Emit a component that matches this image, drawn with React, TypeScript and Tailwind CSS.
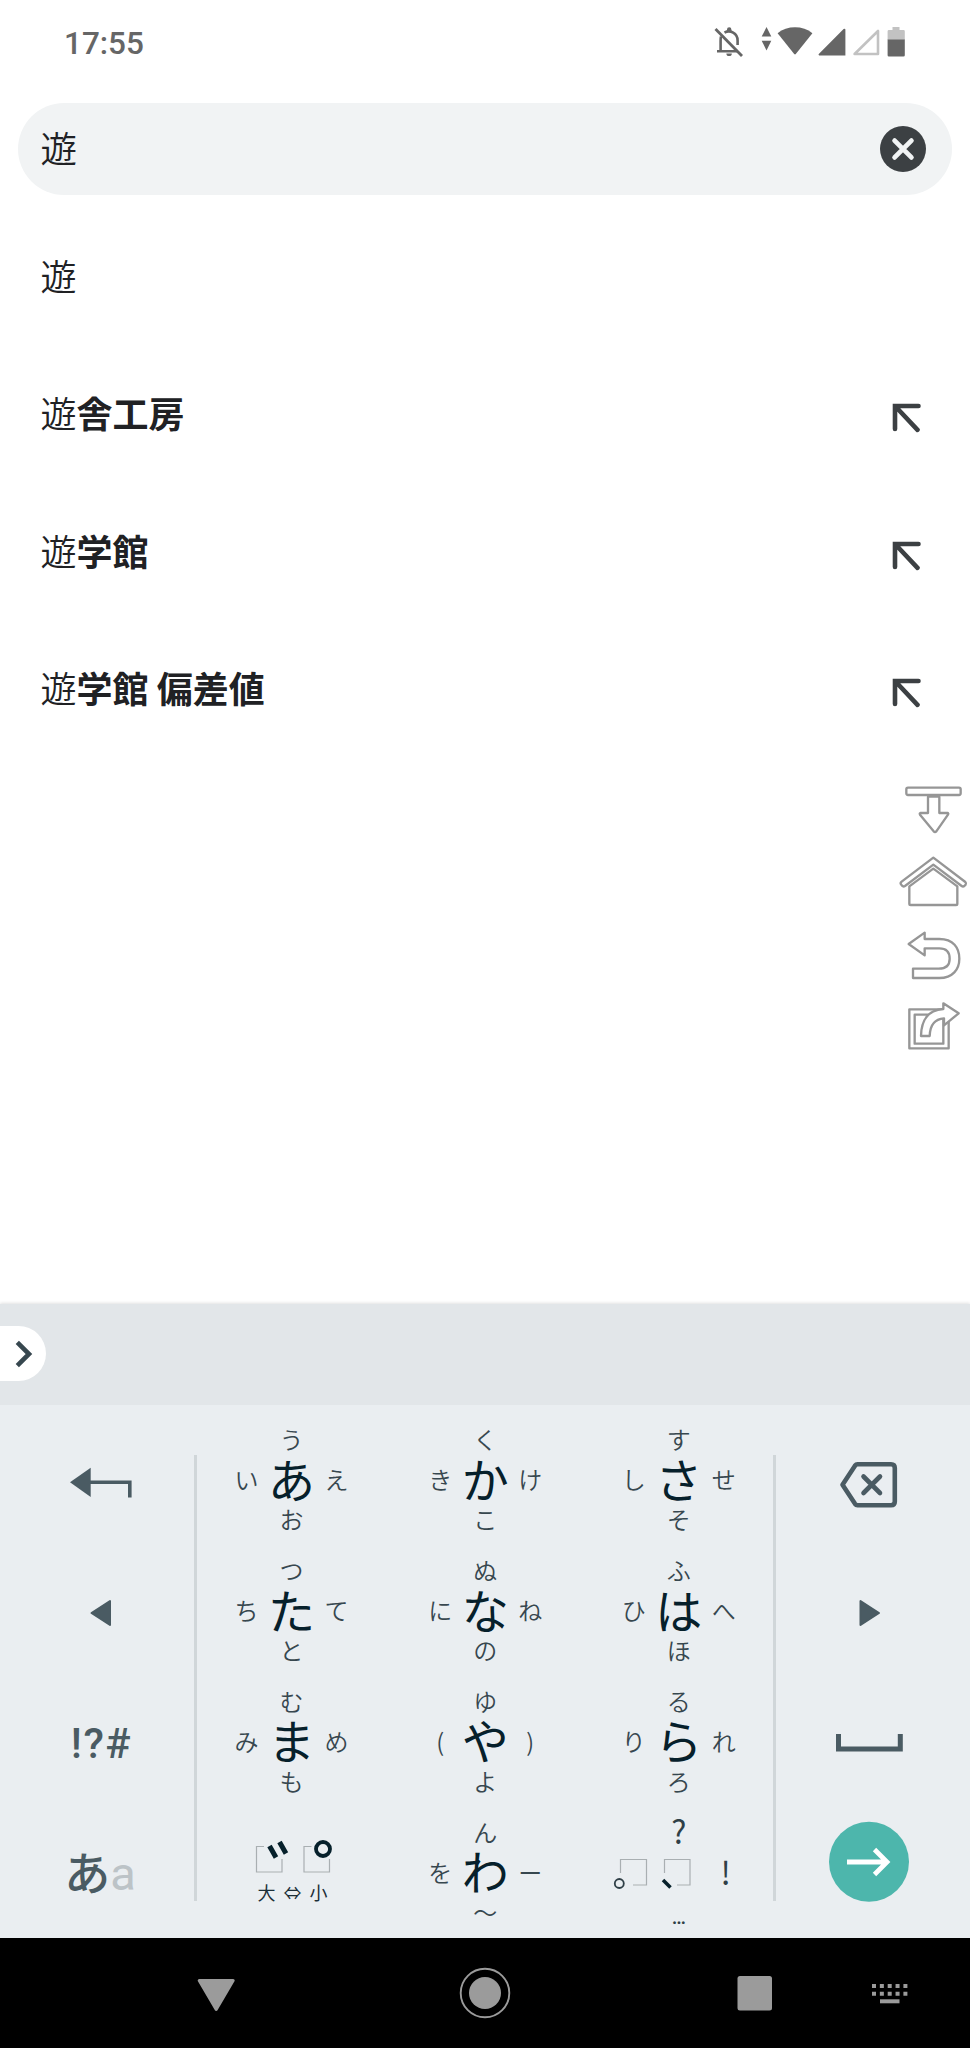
import type { ReactNode } from "react";

interface Suggestion {
  typed: string;
  rest?: string;
}

// order: center, left, top, right, bottom
type Kana = [string, string, string, string, string];

const suggestions: Suggestion[] = [
  { typed: "遊" },
  { typed: "遊", rest: "舎工房" },
  { typed: "遊", rest: "学館" },
  { typed: "遊", rest: "学館 偏差値" },
];

const kanaKeys: Kana[] = [
  ["あ", "い", "う", "え", "お"],
  ["か", "き", "く", "け", "こ"],
  ["さ", "し", "す", "せ", "そ"],
  ["た", "ち", "つ", "て", "と"],
  ["な", "に", "ぬ", "ね", "の"],
  ["は", "ひ", "ふ", "へ", "ほ"],
  ["ま", "み", "む", "め", "も"],
  ["や", "(", "ゆ", ")", "よ"],
  ["ら", "り", "る", "れ", "ろ"],
];

function StatusBar() {
  return (
    <div className="flex h-[103px] items-start pl-[64px] pr-[65px] text-[#666666]">
      <span className="mt-[25px] font-['Roboto'] text-[31.5px] font-medium leading-[38px]">17:55</span>
      <div className="ml-auto mt-[27px] flex">
        <svg className="h-[30px] w-[30px]" viewBox="0 0 30 30" fill="none" stroke="currentColor">
          <path d="M1.5 2L28 29" strokeWidth="2.8" />
          <path d="M7 9.5C6.6 11 6.6 12 6.6 14V23.5M3 24.2H23" strokeWidth="2.6" />
          <path d="M10.5 5.6C16 2.6 23.6 6 23.6 13.5V18" strokeWidth="2.6" />
          <path d="M13 4V2.5a2.2 2.2 0 0 1 4.4 0V4z" fill="currentColor" stroke="none" />
          <path d="M12.4 26.4h5.4a2.7 2.7 0 0 1-5.4 0z" fill="currentColor" stroke="none" />
        </svg>
        <svg className="ml-[17px] h-[30px] w-[11px]" viewBox="0 0 11 30" fill="currentColor">
          <path d="M5.5 0L10.3 9.5H.7zM5.5 23.5L10.3 13.7H.7z" />
        </svg>
        <svg className="ml-[5px] h-[30px] w-[36px]" viewBox="0 0 36 30" fill="currentColor">
          <path d="M.6 6.2C10-1.6 26-1.6 35.4 6.2L18.8 27q-.8.9-1.6 0z" />
        </svg>
        <svg className="ml-[5px] h-[30px] w-[28px]" viewBox="0 0 28 30" fill="currentColor">
          <path d="M27.4 2.4V28.4H1.2q-1.2-.6-.4-1.4L25.6 2q1.5-.8 1.8.4z" />
        </svg>
        <svg className="ml-[6px] h-[30px] w-[28px]" viewBox="0 0 28 30" fill="none">
          <path d="M26 4V27H2.6z" stroke="#c2c2c2" strokeWidth="2.6" strokeLinejoin="round" />
        </svg>
        <svg className="ml-[7px] h-[30px] w-[18px]" viewBox="0 0 18 30">
          <path d="M5.5 0h7v3h4a1.3 1.3 0 0 1 1.3 1.3V13H.6V4.3a1.3 1.3 0 0 1 1.3-1.3h3.6z" fill="#c2c2c2" />
          <path d="M.6 12.5h17.2v15.8a1.3 1.3 0 0 1-1.3 1.3H1.9a1.3 1.3 0 0 1-1.3-1.3z" fill="currentColor" />
        </svg>
      </div>
    </div>
  );
}

function SearchBox() {
  return (
    <div className="mx-[18px] flex h-[92px] items-center justify-between rounded-full bg-[#f1f3f4] pl-[22.5px] pr-[26px]">
      <span className="pb-[2px] text-[36.5px] font-[350] leading-none text-[#202124]">遊</span>
      <svg className="h-[46px] w-[46px]" viewBox="0 0 46 46">
        <circle cx="23" cy="23" r="23" fill="#3c4043" />
        <path d="M14.6 14.6L31.4 31.4M31.4 14.6L14.6 31.4" stroke="#f1f3f4" strokeWidth="4.8" strokeLinecap="round" />
      </svg>
    </div>
  );
}

function SuggestionRow({ typed, rest }: Suggestion) {
  return (
    <li className="flex h-[137.5px] items-center justify-between pl-[40.5px] pr-[48px]">
      <span className="pb-1 text-[36px] font-[350] leading-none text-[#202124]">
        {typed}
        {rest && <span className="font-bold">{rest}</span>}
      </span>
      {rest && (
        <svg className="mt-2 h-[30px] w-[30px]" viewBox="0 0 30 30" fill="none" stroke="#3c4043" strokeWidth="4.6" strokeLinecap="round">
          <path d="M3 26V3H26.5M4 4L25.5 26.8" />
        </svg>
      )}
    </li>
  );
}

// Quick actions that float over the page near the right edge
function FloatingTools() {
  return (
    <div className="absolute right-0 top-[589px] w-[72px] [&_svg]:w-[72px] [&_svg]:fill-white [&_svg]:stroke-[#969696] [&_svg]:stroke-[7]">
      <svg className="h-[52px]" viewBox="84 42 216 156" strokeLinejoin="round">
        <rect x="109" y="53" width="163" height="22" rx="5" />
        <path d="M174 80H208V129H234Q236 131 234 134L199 184Q195 188 191 184L150 134Q148 130 151 129H174Z" />
      </svg>
      <svg className="mt-[18px] h-[54px]" viewBox="84 252 216 162" strokeLinejoin="round">
        <path d="M118 349L190 296L262 349V401Q262 405 258 405H122Q118 405 118 401Z" />
        <path d="M190 263L286 336Q290 340 287 344L283 348Q279 351 275 348L190 284L105 348Q100 351 96 347L93 343Q90 339 95 335Z" />
      </svg>
      <svg className="mt-[22px] h-[52px]" viewBox="84 480 216 156" strokeLinejoin="round">
        <path d="M116 522L164 488V507H208C250 507 268 534 268 566C268 598 248 624 208 624H129V596H206C228 596 239 586 239 566C239 546 228 535 208 535H164V556Z" />
      </svg>
      <svg className="mt-[18px] h-[52px]" viewBox="84 690 216 156" strokeLinejoin="round">
        <path d="M118 718H236V835H118Z" />
        <path d="M134 734H220V821H134Z" />
        <path d="M153 798C154 745 180 719 220 717V700L266 730L222 766V745C194 747 180 765 179 798Z" />
      </svg>
    </div>
  );
}

function Key({ children }: { children: ReactNode }) {
  return <div className="flex h-[130.5px] items-center justify-center">{children}</div>;
}

function Icon({ children }: { children: ReactNode }) {
  return (
    <svg className="h-24 w-24 overflow-visible" viewBox="0 0 96 96" fill="#4a5b63">
      {children}
    </svg>
  );
}

function KanaKey({ kana }: { kana: Kana }) {
  const [center, left, top, right, bottom] = kana;
  return (
    <Key>
      <div className="-mt-[2px] grid grid-cols-[45px_45px_45px] grid-rows-[40px_40px_40px] place-items-center text-2xl font-[350] leading-none text-[#37474f]">
        <span className="col-start-2 row-start-1">{top}</span>
        <span className="col-start-1 row-start-2">{left}</span>
        <span className="col-start-2 row-start-2 -mt-1 text-[47px] font-normal leading-none text-[#06202b]">{center}</span>
        <span className="col-start-3 row-start-2">{right}</span>
        <span className="col-start-2 row-start-3">{bottom}</span>
      </div>
    </Key>
  );
}

function VoicingKey() {
  return (
    <Key>
      <div className="-mt-[6px] flex flex-col items-center">
        <svg className="h-[36px] w-[80px]" viewBox="0 0 80 36" fill="none">
          <path d="M12 8.5H4.5V34H30V21M59.5 8.5H52V34H77.5V21" stroke="#a9afb2" strokeWidth="1.2" />
          <path d="M17.5 8L24 19.5M27.5 4L34 15.5" stroke="#06202b" strokeWidth="5" />
          <circle cx="71" cy="11" r="7" stroke="#06202b" strokeWidth="3.8" />
        </svg>
        <div className="ml-[2px] mt-[9px] flex gap-2 text-[18px] leading-none text-[#1c2f38]">
          <span>大</span>
          <span>⇔</span>
          <span>小</span>
        </div>
      </div>
    </Key>
  );
}

function PunctuationKey() {
  return (
    <Key>
      <div className="grid grid-cols-[46px_46px_46px] grid-rows-[40px_40px_40px] place-items-center leading-none text-[#2f3f47]">
        <span className="col-start-2 row-start-1 -mt-[6px] text-[32px]">?</span>
        <svg className="col-start-1 row-start-2 h-[40px] w-[46px]" viewBox="0 0 46 40" fill="none">
          <path d="M10.5 20V6.5H36.5V32H23" stroke="#a9afb2" strokeWidth="1.2" />
          <circle cx="9.3" cy="30.5" r="4.5" stroke="#2f3f47" strokeWidth="1.8" />
        </svg>
        <svg className="col-start-2 row-start-2 h-[40px] w-[46px]" viewBox="0 0 46 40" fill="none">
          <path d="M8.5 20V6.5H34V32H21" stroke="#a9afb2" strokeWidth="1.2" />
          <path d="M7 27L14.5 34.5" stroke="#06202b" strokeWidth="3.6" />
        </svg>
        <span className="col-start-3 row-start-2 -mt-1 pl-[2px] text-[32px]">!</span>
        <span className="col-start-2 row-start-3 mt-2 font-['Roboto'] text-xl font-medium">…</span>
      </div>
    </Key>
  );
}

function Keyboard() {
  return (
    <div className="flex h-[533px] bg-[#eaeef1] pt-[10px]">
      <div className="w-[194px] text-[#4a5b63]">
        <Key>
          <Icon>
            <path d="M21 50.3L41.7 35.8V65Z" />
            <path d="M41 50.2H80.8V65.6" fill="none" stroke="#4a5b63" strokeWidth="3.6" />
          </Icon>
        </Key>
        <Key>
          <Icon>
            <path d="M42.5 50L61 38V62Z" stroke="#4a5b63" strokeWidth="2" strokeLinejoin="round" />
          </Icon>
        </Key>
        <Key>
          <span className="pl-[9px] pt-[5px] font-['Roboto'] text-[42px] font-medium leading-none tracking-[1.5px]">!?#</span>
        </Key>
        <Key>
          <span className="flex items-baseline pl-[6px] leading-none">
            <span className="text-[46px] font-medium">あ</span>
            <span className="font-['Roboto'] text-[47px] font-normal text-[#bcc3c7]">a</span>
          </span>
        </Key>
      </div>

      <div className="relative grid w-[582px] grid-cols-[194px_193.5px_193.5px] pl-[0.5px]">
        <div className="absolute left-0 top-[40px] h-[446px] w-[3px] bg-[#d0d6d9]" />
        <div className="absolute right-0 top-[40px] h-[446px] w-[3px] bg-[#d0d6d9]" />
        {kanaKeys.map((kana) => (
          <KanaKey key={kana[0]} kana={kana} />
        ))}
        <VoicingKey />
        <KanaKey kana={["わ", "を", "ん", "ー", "〜"]} />
        <PunctuationKey />
      </div>

      <div className="w-[194px]">
        <Key>
          <Icon>
            <g fill="none" stroke="#4a5b63" strokeWidth="4.6" strokeLinejoin="round" strokeLinecap="round">
              <path d="M32.5 32.3H66Q69.8 32.3 69.8 36V69.5Q69.8 73.2 66 73.2H32.5Q31 73.2 30 71.8L17.5 52.7L30 33.7Q31 32.3 32.5 32.3Z" />
              <path d="M38.5 44.5L55 61M55 44.5L38.5 61" />
            </g>
          </Icon>
        </Key>
        <Key>
          <Icon>
            <path d="M54 50L35.5 38V62Z" stroke="#4a5b63" strokeWidth="2" strokeLinejoin="round" />
          </Icon>
        </Key>
        <Key>
          <Icon>
            <path d="M13.5 41V56H75.3V41" fill="none" stroke="#4a5b63" strokeWidth="5" />
          </Icon>
        </Key>
        <Key>
          <Icon>
            <circle cx="44" cy="37.8" r="40" fill="#4db6ac" />
            <path d="M22 38H63M49.5 25.5L62 38L49.5 50.5" fill="none" stroke="#fff" strokeWidth="4.8" />
          </Icon>
        </Key>
      </div>
    </div>
  );
}

function NavBar() {
  return (
    <div className="flex flex-1 items-center bg-black pl-[189px] [&_svg]:h-[54px] [&_svg]:w-[54px]">
      <svg viewBox="0 0 54 54" fill="#9b9b9b" stroke="#9b9b9b" strokeWidth="3" strokeLinejoin="round">
        <path d="M10.2 14.5H44.2L27.2 43.5Z" />
      </svg>
      <svg className="ml-[215px]" viewBox="0 0 54 54" fill="#9b9b9b">
        <circle cx="27" cy="27" r="16" />
        <circle cx="27" cy="27" r="24.3" fill="none" stroke="#9b9b9b" strokeWidth="1.9" />
      </svg>
      <svg className="ml-[216px]" viewBox="0 0 54 54" fill="#9b9b9b">
        <rect x="9.5" y="10" width="34.5" height="34.5" rx="2.5" />
      </svg>
      <svg className="ml-[81px]" viewBox="0 0 54 54" fill="none" stroke="#9b9b9b" strokeWidth="4">
        <path d="M9 20H45M9 27.8H45" strokeDasharray="4 3.85" />
        <path d="M17 35.3H36.5" />
      </svg>
    </div>
  );
}

export default function App() {
  return (
    <div className="flex h-[2048px] w-[970px] flex-col overflow-hidden bg-white font-['Noto_Sans_CJK_JP',sans-serif]">
      <StatusBar />
      <SearchBox />
      <div className="relative h-[1109px] pt-[13px]">
        <ul>
          {suggestions.map((item) => (
            <SuggestionRow key={item.typed + (item.rest ?? "")} {...item} />
          ))}
        </ul>
        <FloatingTools />
      </div>
      <div className="flex h-[101px] items-center bg-[#e2e6e9] shadow-[0_-1px_3px_rgba(0,0,0,0.12)]">
        <div className="mb-[2px] flex h-[55px] w-[46px] items-center rounded-r-full bg-white pl-[15px]">
          <svg className="h-[28px] w-[18px]" viewBox="0 0 18 28" fill="none" stroke="#37474f" strokeWidth="4.6">
            <path d="M2.3 2.3L14 14L2.3 25.7" />
          </svg>
        </div>
      </div>
      <Keyboard />
      <NavBar />
    </div>
  );
}
